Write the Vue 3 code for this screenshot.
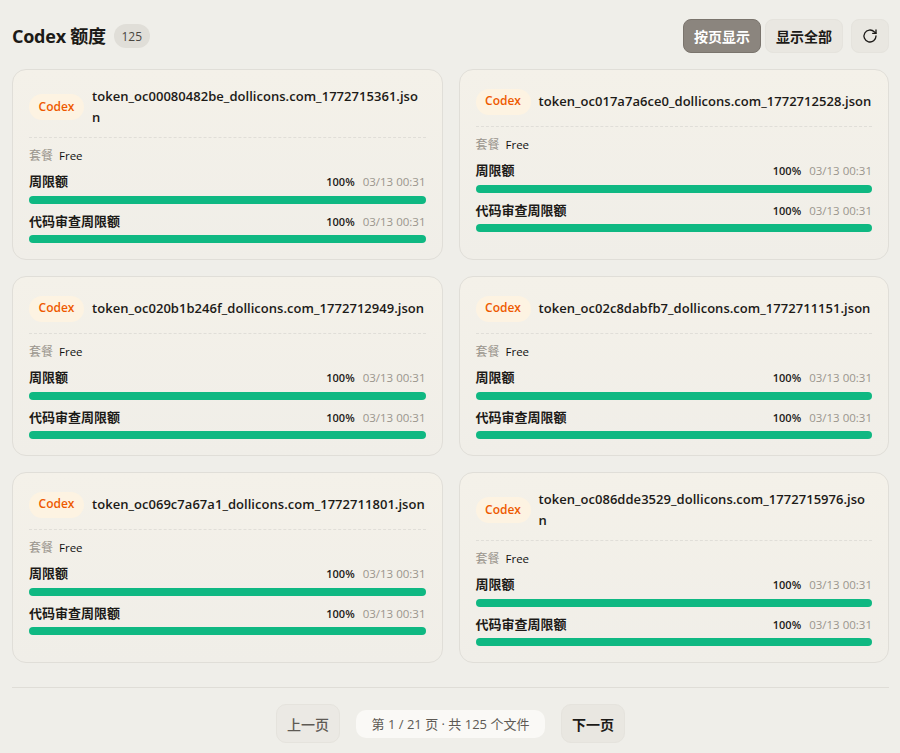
<script setup>
const cards = [
  'token_oc00080482be_dollicons.com_1772715361.json',
  'token_oc017a7a6ce0_dollicons.com_1772712528.json',
  'token_oc020b1b246f_dollicons.com_1772712949.json',
  'token_oc02c8dabfb7_dollicons.com_1772711151.json',
  'token_oc069c7a67a1_dollicons.com_1772711801.json',
  'token_oc086dde3529_dollicons.com_1772715976.json',
]
const quotas = ['周限额', '代码审查周限额']
</script>

<template>
  <div class="page">
    <header class="top">
      <div class="title">
        <h1>Codex 额度</h1>
        <span class="count">125</span>
      </div>
      <div class="actions">
        <button class="btn active">按页显示</button>
        <button class="btn">显示全部</button>
        <button class="btn icon" aria-label="刷新">
          <svg width="16" height="16" viewBox="0 0 24 24" fill="none" stroke="currentColor" stroke-width="2" stroke-linecap="round" stroke-linejoin="round">
            <path d="M21 12a9 9 0 1 1-2.64-6.36L21 8" />
            <path d="M21 3v5h-5" />
          </svg>
        </button>
      </div>
    </header>

    <div class="grid">
      <article v-for="name in cards" :key="name" class="card">
        <div class="head">
          <span class="tag">Codex</span>
          <span class="name">{{ name }}</span>
        </div>
        <div class="plan"><span class="plan-label">套餐</span><span class="plan-value">Free</span></div>
        <div v-for="q in quotas" :key="q" class="quota">
          <div class="quota-row">
            <span class="quota-name">{{ q }}</span>
            <span class="quota-meta"><span class="pct">100%</span><span class="time">03/13 00:31</span></span>
          </div>
          <div class="track"><div class="fill" :style="{ width: '100%' }"></div></div>
        </div>
      </article>
    </div>

    <footer class="pager">
      <button class="btn page-btn prev">上一页</button>
      <span class="info">第 1 / 21 页 · 共 125 个文件</span>
      <button class="btn page-btn next">下一页</button>
    </footer>
  </div>
</template>

<style>
html, body { margin: 0; background: #efeee9; }
</style>

<style scoped>
.page {
  box-sizing: border-box;
  width: 900px;
  height: 753px;
  overflow: hidden;
  padding: 19px 11px 0 12px;
  background: #efeee9;
  color: #1c1a17;
  font-family: "Open Sans", "Noto Sans CJK SC", sans-serif;
}
.top { display: flex; align-items: center; justify-content: space-between; height: 34px; margin-bottom: 16px; }
.title { display: flex; align-items: center; gap: 8px; }
h1 { margin: 0; font-size: 18px; line-height: 24px; font-weight: 700; letter-spacing: -0.25px; }
.count {
  display: flex; align-items: center; justify-content: center;
  width: 36px; height: 24px; border-radius: 12px;
  background: #e0ded8; color: #4a4641; font-size: 12px;
}
.actions { display: flex; gap: 4px; }
.btn {
  box-sizing: border-box; width: 78px; height: 34px; padding: 0;
  border: 1px solid #e5e3dd; border-radius: 8px;
  background: #e9e7e1; color: #1c1a17;
  font: 700 14px "Open Sans", "Noto Sans CJK SC", sans-serif;
}
.btn.active { background: #8b857e; border-color: #7a746d; color: #fff; }
.btn.icon { width: 38px; margin-left: 4px; display: flex; align-items: center; justify-content: center; }
.grid { display: grid; grid-template-columns: 1fr 1fr; gap: 16px; }
.card {
  box-sizing: border-box;
  padding: 16px;
  border: 1px solid #e0ded8;
  border-radius: 14px;
  background: linear-gradient(180deg, #f4f1e9, #f0eee8);
}
.head {
  display: flex; align-items: center; gap: 8px;
  padding-bottom: 9px; min-height: 31px;
  border-bottom: 1px dashed #e0ded8;
}
.tag {
  flex: none; width: 55px; height: 26px; border-radius: 13px;
  display: flex; align-items: center; justify-content: center;
  background: #fdf3e2; color: #ee5a00; font-size: 12px; font-weight: 600;
  line-height: 16px; padding-bottom: 1px; box-sizing: border-box;
}
.name { min-width: 0; font-size: 13px; line-height: 21px; font-weight: 600; letter-spacing: 0.035px; overflow-wrap: anywhere; }
.plan { display: flex; align-items: center; gap: 6px; margin-top: 8px; height: 18px; font-size: 11.5px; }
.plan-label { color: #9a958d; font-size: 12px; }
.plan-value { color: #111; font-weight: 500; }
.quota { margin-top: 9px; }
.quota-row { display: flex; justify-content: space-between; align-items: flex-start; height: 18px; margin-bottom: 5px; }
.quota:last-child .quota-row { margin-bottom: 4px; }
.quota-name { font-size: 13px; line-height: 16px; font-weight: 600; }
.quota-meta { display: flex; gap: 8px; font-size: 11.5px; line-height: 17px; }
.pct { font-size: 11px; font-weight: 600; }
.time { color: #9a958d; }
.track { height: 8px; border-radius: 4px; background: #e0ded8; overflow: hidden; }
.fill { height: 100%; background: #0fb882; }
.pager {
  display: flex; align-items: center; justify-content: center; gap: 16px;
  margin-top: 24px; padding-top: 16px;
  border-top: 1px solid #dfddd7;
}
.page-btn { width: 64px; height: 39px; border-radius: 10px; }
.prev { background: #ebe9e4; color: #5e5a54; font-weight: 500; }
.info {
  box-sizing: border-box; height: 28px; width: 189px; border-radius: 10px;
  display: flex; align-items: center; justify-content: center; white-space: nowrap;
  background: #faf9f6; color: #5e5a54; font-size: 13px;
}
</style>
